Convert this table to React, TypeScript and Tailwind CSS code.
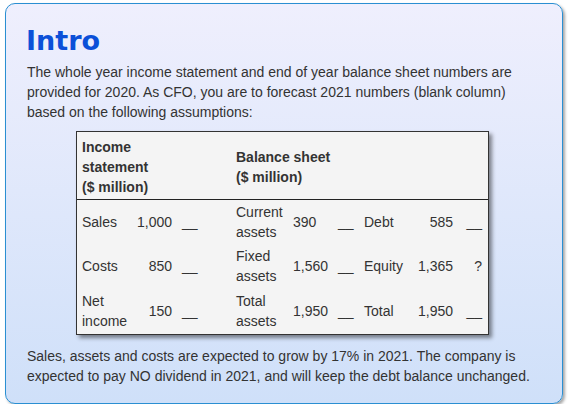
const cell = "flex items-center px-[5px] leading-[20px]";

function Blank({ v = "__" }: { v?: string }) {
  return <span>{v}</span>;
}

export default function App() {
  const rows = [
    { a: "Sales", b: "1,000", c: "Current assets", d: "390", e: "Debt", f: "585", g: "__" },
    { a: "Costs", b: "850", c: "Fixed assets", d: "1,560", e: "Equity", f: "1,365", g: "?" },
    { a: "Net income", b: "150", c: "Total assets", d: "1,950", e: "Total", f: "1,950", g: "__" },
  ];

  return (
    <div className="pl-[5px] pt-[3px] font-['Liberation_Sans',Arial,sans-serif] text-[14px] text-[#333]">
      <div className="w-[558px] h-[401px] rounded-[10px] border border-[#2a8fd2] bg-gradient-to-b from-[#efeffd] to-[#cfe0f9] shadow-[2px_2px_3px_rgba(0,0,0,0.35)] pl-[18px] pr-[20px] pt-[21px]">
        <h1 className="pl-[2px] font-['DejaVu_Sans',Verdana,sans-serif] font-bold text-[27px] leading-[31px] text-[#0b50d8]">
          Intro
        </h1>
        <p className="mt-[6px] pl-[3px] leading-[20px]">
          The whole year income statement and end of year balance sheet numbers are provided for 2020. As CFO, you are to
          forecast 2021 numbers (blank column) based on the following assumptions:
        </p>

        {/* table */}
        <div className="mt-[9px] ml-[52px] w-[413px] border border-[#333] bg-[#f4f4f4] shadow-[3px_3px_4px_rgba(0,0,0,0.45)]">
          <div className="flex h-[68px] border-b border-[#222] pt-[5px] pb-[2px] font-bold">
            <div className="w-[100px] px-[5px] leading-[20px]">
              Income
              <br />
              statement
              <br />($ million)
            </div>
            <div className="w-[53px]" />
            <div className="flex items-center px-[6px] leading-[20px]">
              <div>
                Balance sheet
                <br />($ million)
              </div>
            </div>
          </div>
          {rows.map((r, i) => (
            <div key={i} className={`grid grid-cols-[55px_45px_53px_58px_45px_26px_51px_48px_30px] ${i === 2 ? "h-[46px]" : "h-[44px]"}`}>
              <div className={cell}>{r.a}</div>
              <div className={`${cell} justify-end`}>{r.b}</div>
              <div className={cell}>
                <Blank />
              </div>
              <div className={`${cell} pl-[6px]`}>{r.c}</div>
              <div className={cell}>{r.d}</div>
              <div className={cell}>
                <Blank />
              </div>
              <div className={cell}>{r.e}</div>
              <div className={`${cell} justify-end`}>{r.f}</div>
              <div className={`${cell} justify-end pr-[6px]`}>
                <Blank v={r.g} />
              </div>
            </div>
          ))}
        </div>

        <p className="mt-[12px] pl-[3px] leading-[19.5px]">
          Sales, assets and costs are expected to grow by 17% in 2021. The company is expected to pay NO dividend in 2021,
          and will keep the debt balance unchanged.
        </p>
      </div>
    </div>
  );
}
